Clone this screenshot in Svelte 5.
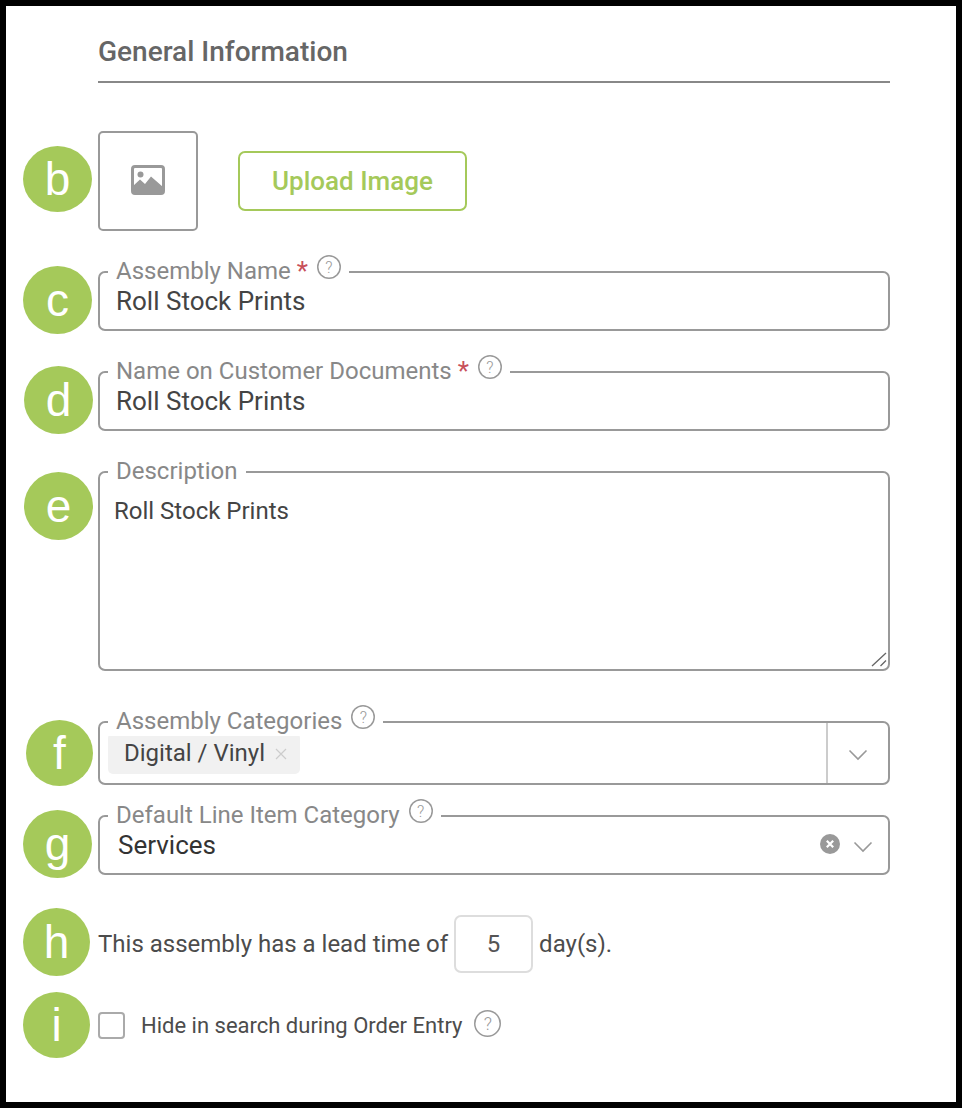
<script>
    let name = "Roll Stock Prints";
    let customerName = "Roll Stock Prints";
    let description = "Roll Stock Prints";
    let leadTime = 5;
</script>

{#snippet help()}
    <span class="help">?</span>
{/snippet}

{#snippet chevron()}
    <svg class="chevron" viewBox="0 0 20 12" width="20" height="12">
        <path d="M1.5 1.5 L10 10 L18.5 1.5" fill="none" stroke="#999" stroke-width="1.6" />
    </svg>
{/snippet}

<div class="frame">
    <div class="form">
        <h2>General Information</h2>

        <div class="row image-row">
            <span class="badge badge-b">b</span>
            <div class="image-box">
                <svg viewBox="0 0 34 30" width="34" height="30">
                    <rect x="1.5" y="1.5" width="31" height="27" rx="2.5" fill="#fff" stroke="#999" stroke-width="3" />
                    <circle cx="9.5" cy="9.5" r="3" fill="#999" />
                    <path d="M2 28 L2 21 L9 14.5 L14 19 L20 11.5 L32 22 L32 28 Z" fill="#999" />
                </svg>
            </div>
            <button class="upload">Upload Image</button>
        </div>

        <div class="row field name-field">
            <span class="badge badge-c">c</span>
            <div class="legend">Assembly Name <span class="req">*</span> {@render help()}</div>
            <input type="text" bind:value={name} />
        </div>

        <div class="row field name-field">
            <span class="badge badge-d">d</span>
            <div class="legend">Name on Customer Documents <span class="req">*</span> {@render help()}</div>
            <input type="text" bind:value={customerName} />
        </div>

        <div class="row field desc-field">
            <span class="badge badge-e">e</span>
            <div class="legend">Description</div>
            <textarea bind:value={description}></textarea>
            <svg class="grip" viewBox="0 0 16 16" width="16" height="16">
                <path d="M1 15 L15 2 M9.5 15 L15 9.5" stroke="#666" stroke-width="1.3" fill="none" />
            </svg>
        </div>

        <div class="row field cat-field">
            <span class="badge badge-f">f</span>
            <div class="legend">Assembly Categories {@render help()}</div>
            <div class="cat-values">
                <span class="chip">Digital / Vinyl
                    <svg class="chip-x" viewBox="0 0 12 12" width="12" height="12">
                        <path d="M1 1 L11 11 M11 1 L1 11" stroke="#ccc" stroke-width="1.2" />
                    </svg>
                </span>
            </div>
            <div class="cat-arrow">{@render chevron()}</div>
        </div>

        <div class="row field line-field">
            <span class="badge badge-g">g</span>
            <div class="legend">Default Line Item Category {@render help()}</div>
            <span class="line-value">Services</span>
            <svg class="clear" viewBox="0 0 20 20" width="20" height="20">
                <circle cx="10" cy="10" r="10" fill="#999" />
                <path d="M6.8 6.8 L13.2 13.2 M13.2 6.8 L6.8 13.2" stroke="#fff" stroke-width="2.2" />
            </svg>
            {@render chevron()}
        </div>

        <div class="row lead-row">
            <span class="badge badge-h">h</span>
            This assembly has a lead time of
            <input type="text" class="lead-input" bind:value={leadTime} />
            day(s).
        </div>

        <div class="row check-row">
            <span class="badge badge-i">i</span>
            <input type="checkbox" />
            <span class="check-label">Hide in search during Order Entry</span>
            <span class="check-help">{@render help()}</span>
        </div>
    </div>
</div>

<style>
    :global(body) {
        margin: 0;
        background: #000;
    }

    .frame {
        box-sizing: border-box;
        height: 1108px;
        border: 6px solid #000;
        background: #fff;
        font-family: Roboto, "Liberation Sans", sans-serif;
        color: #4c4c4c;
    }

    .form {
        width: 792px;
        margin-left: 92px;
    }

    h2 {
        margin: 0;
        padding-top: 28px;
        height: 47px;
        line-height: 36px;
        font-size: 28px;
        font-weight: 500;
        color: #666;
        border-bottom: 2px solid #888;
    }

    .row {
        position: relative;
        box-sizing: border-box;
    }

    .badge {
        position: absolute;
        display: flex;
        align-items: center;
        justify-content: center;
        width: 69px;
        height: 68px;
        left: -75px;
        border-radius: 50%;
        background: #a5c95a;
        color: #fff;
        font-family: "Liberation Sans", Arial, sans-serif;
        font-size: 46px;
    }

    .badge-b { top: 15px; height: 66px; }
    .badge-c { top: -7px; left: -77px; }
    .badge-d { top: -7px; left: -76px; }
    .badge-e { top: -1px; left: -76px; }
    .badge-f { top: -3px; left: -74px; width: 67px; height: 66px; }
    .badge-g { top: -7px; left: -77px; }
    .badge-h { top: -7px; width: 67px; }
    .badge-i { top: -20px; width: 67px; height: 66px; }

    .image-row {
        display: flex;
        align-items: center;
        gap: 40px;
        margin-top: 48px;
        height: 100px;
    }

    .image-box {
        box-sizing: border-box;
        display: flex;
        align-items: center;
        justify-content: center;
        width: 100px;
        height: 100px;
        padding-bottom: 2px;
        border: 2px solid #999;
        border-radius: 5px;
    }

    .upload {
        width: 229px;
        height: 60px;
        padding: 0;
        background: #fff;
        border: 2px solid #a5c95a;
        border-radius: 7px;
        color: #a5c95a;
        font-family: inherit;
        font-size: 26px;
        font-weight: 500;
    }

    .field {
        display: flex;
        align-items: center;
        border: 2px solid #999;
        border-radius: 7px;
    }

    .legend {
        position: absolute;
        top: -17px;
        left: 8px;
        display: flex;
        align-items: center;
        gap: 6px;
        height: 30px;
        padding: 0 8px;
        background: #fff;
        font-size: 24px;
        color: #888;
        white-space: nowrap;
    }

    .req {
        color: #c8505a;
        font-size: 26px;
    }

    .help {
        display: inline-flex;
        align-items: center;
        justify-content: center;
        box-sizing: border-box;
        width: 24px;
        height: 24px;
        margin: -8px 0 0 3px;
        box-shadow: inset 0 0 0 1.5px #999;
        border-radius: 50%;
        font-size: 16px;
        font-weight: 300;
        color: #999;
    }

    .field input {
        width: 100%;
        padding: 0 16px;
        margin-top: -1px;
        border: 0;
        outline: 0;
        background: transparent;
        font-family: inherit;
        font-size: 26px;
        color: #444;
    }

    .name-field {
        height: 60px;
        margin-top: 40px;
    }

    .desc-field {
        height: 200px;
        margin-top: 40px;
    }

    textarea {
        box-sizing: border-box;
        width: 100%;
        height: 100%;
        padding: 24px 14px 0;
        border: 0;
        outline: 0;
        resize: none;
        background: transparent;
        font-family: inherit;
        font-size: 24px;
        color: #444;
    }

    .grip {
        position: absolute;
        right: 1px;
        bottom: 2px;
    }

    .cat-field {
        height: 64px;
        margin-top: 50px;
    }

    .cat-values {
        flex: 1;
        align-self: flex-start;
        padding: 10px 8px 0;
    }

    .chip {
        display: flex;
        align-items: center;
        height: 41px;
        width: 192px;
        box-sizing: border-box;
        padding: 0 0 2px 16px;
        background: #f1f1f1;
        border-radius: 5px;
        font-size: 24px;
        color: #444;
    }

    .chip-x {
        margin: 3px 0 0 10px;
    }

    .cat-arrow {
        display: flex;
        align-items: center;
        justify-content: center;
        align-self: stretch;
        width: 60px;
        border-left: 2px solid #ccc;
    }

    .line-field {
        height: 60px;
        margin-top: 30px;
        padding-right: 15px;
    }

    .line-value {
        flex: 1;
        padding-left: 18px;
        font-size: 26px;
        color: #333;
    }

    .clear {
        margin: 0 13px 2px 0;
    }

    .chevron {
        display: block;
        margin-top: 3px;
    }

    .lead-row {
        display: flex;
        align-items: center;
        gap: 6px;
        height: 58px;
        margin-top: 40px;
        font-size: 24px;
    }

    .lead-row .lead-input {
        box-sizing: border-box;
        width: 79px;
        height: 58px;
        border: 2px solid #ddd;
        border-radius: 7px;
        outline: 0;
        text-align: center;
        font-family: inherit;
        font-size: 24px;
        color: #555;
    }

    .check-row {
        display: flex;
        align-items: center;
        height: 27px;
        margin-top: 39px;
    }

    input[type="checkbox"] {
        appearance: none;
        box-sizing: border-box;
        width: 27px;
        height: 27px;
        margin: 0;
        background: #fff;
        border: 2px solid #aaa;
        border-radius: 4px;
    }

    .check-label {
        margin: 0 9px 0 16px;
        font-size: 22px;
    }

    .check-help {
        display: flex;
    }

    .check-help .help {
        width: 27px;
        height: 27px;
        margin-top: -4px;
        font-size: 18px;
    }
</style>
